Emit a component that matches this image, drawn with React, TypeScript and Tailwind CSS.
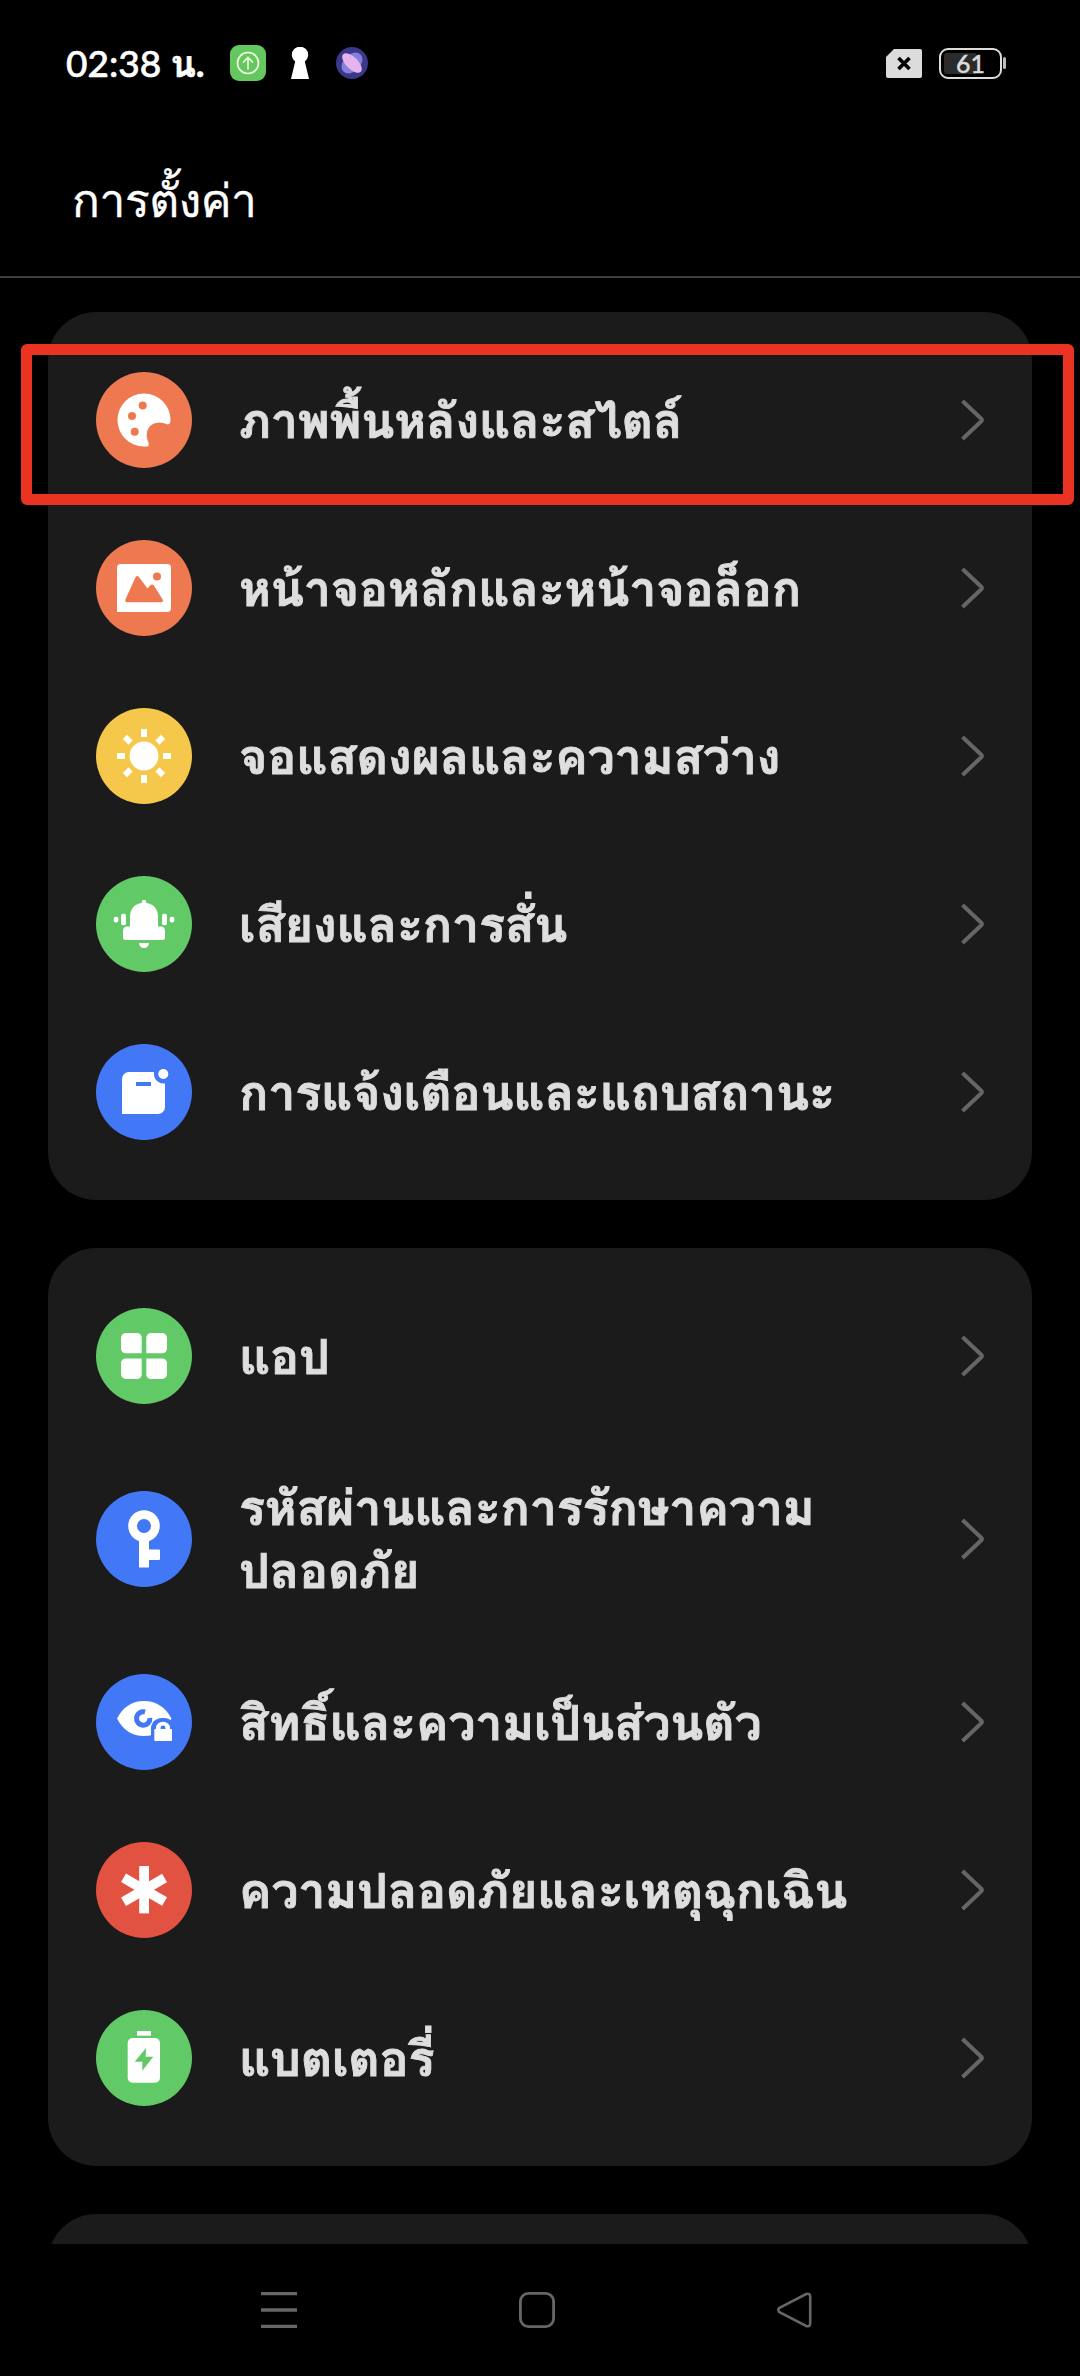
import type { ReactNode } from 'react';

const icons = {
  palette: (
    <g>
      <path fill="#fff" d="M74.5 48A26.5 26.5 0 1 0 48 74.5h2.2q3.2 0 2.4-3.6-2-4.4-2-8Q51.500 51.500 63 50.600q4.500 0 8 1.700 3.500.7 3.500-4.300z" />
      <circle cx="46.700" cy="33.500" r="4" />
      <circle cx="36" cy="44" r="4" />
      <circle cx="38.700" cy="59.700" r="4" />
    </g>
  ),
  picture: (
    <g>
      <path fill="#fff" d="M25 24h46a4 4 0 0 1 4 4v40a4 4 0 0 1-4 4H21V28a4 4 0 0 1 4-4z" />
      <path d="M29.400 59.500 39.500 37.300q1.800-2.800 3.600 0L51.500 48.500l3-3.500q1.500-1.200 3 0L67 60q.4 2-1.500 2.300h-35q-2-.8-1.100-2.800z" />
      <circle cx="61" cy="36.500" r="4" />
    </g>
  ),
  sun: (
    <g fill="#fff">
      <circle cx="48" cy="48" r="14.500" />
      {[0, 45, 90, 135, 180, 225, 270, 315].map((a) => (
        <rect key={a} x="45" y="21" width="6" height="8" transform={`rotate(${a} 48 48)`} />
      ))}
    </g>
  ),
  bell: (
    <g fill="#fff">
      <path d="M46 26v-1q0-1 1-1h2q1 0 1 1v1.700Q62 29 62 41v9.500h3.500q3.500.8 3.500 4.500v6.500q0 2.500-2.500 2.500h-37Q27 64 27 61.500V55q0-3.700 3.500-4.500H34V41q0-12 12-14.300z" />
      <path d="M43 67h10q-.5 5-5 5t-5-5z" />
      <rect x="25" y="37.700" width="5" height="11.500" rx="2" />
      <rect x="17.700" y="40.700" width="4.700" height="5.700" rx="2" />
      <rect x="66" y="37.700" width="5" height="11.500" rx="2" />
      <rect x="73.700" y="40.700" width="4.700" height="5.700" rx="2" />
    </g>
  ),
  notice: (
    <g>
      <path fill="#fff" d="M33 28h25v2a9.500 9.500 0 0 0 11 9.400V63a7 7 0 0 1-7 7H26V35a7 7 0 0 1 7-7z" />
      <circle fill="#fff" cx="67.300" cy="30" r="5" />
      <rect x="40" y="38" width="15" height="4" />
    </g>
  ),
  apps: (
    <g fill="#fff">
      <path d="M30 25h11a4.700 4.700 0 0 1 4.700 4.700v15.600H29.700A4.700 4.700 0 0 1 25 40.600V30a5 5 0 0 1 5-5z" />
      <path d="M55 25h11a5 5 0 0 1 5 5v10.600a4.700 4.700 0 0 1-4.700 4.700h-16V29.700A4.700 4.700 0 0 1 55 25z" />
      <path d="M29.700 50.400h16v16A4.600 4.600 0 0 1 41 71H30a5 5 0 0 1-5-5V55a4.600 4.600 0 0 1 4.700-4.600z" />
      <path d="M50.300 50.400h16A4.600 4.600 0 0 1 71 55v11a5 5 0 0 1-5 5H55a4.600 4.600 0 0 1-4.700-4.600z" />
    </g>
  ),
  key: (
    <g>
      <circle cx="48" cy="35" r="11.400" fill="none" stroke="#fff" strokeWidth="8.800" />
      <path fill="#fff" d="M43 48h10v10.500h10q1 0 1 1V68q0 1-1 1H53v7q0 .6-.6.6h-8.800q-.6 0-.6-.6z" />
    </g>
  ),
  privacy: (
    <g>
      <path fill="#fff" d="M21 44.500Q30 27 48 27t27.500 17.500Q66 62 48 62T21 44.500z" />
      <path fill="none" stroke="currentColor" strokeWidth="5" d="M49 38a6.700 6.700 0 1 0 4.900 6" />
      <path d="M55 70V54.500q0-3 1.300-5Q59 44 67 44t10.500 5.500q1.500 2 1.500 5V70z" />
      <path fill="#fff" d="M60 55v-1.500a7 5.800 0 0 1 14 0V55h1.200q.8 0 .8.800v10.400q0 .8-.8.8H59.100q-.8 0-.8-.8V55.800q0-.8.800-.8zm4.600 0h4.800v-1.200a2.400 2.400 0 0 0-4.800 0z" />
    </g>
  ),
  emergency: (
    <g fill="#fff">
      <rect x="43.200" y="24" width="9.800" height="47.400" />
      <rect x="43.200" y="24" width="9.800" height="47.400" transform="rotate(60 48 47.700)" />
      <rect x="43.200" y="24" width="9.800" height="47.400" transform="rotate(-60 48 47.700)" />
    </g>
  ),
  battery: (
    <g>
      <rect fill="#fff" x="41" y="21" width="14" height="4.700" />
      <rect fill="#fff" x="31.700" y="28" width="32.300" height="44.700" rx="5" />
      <path d="M50 38 38.700 51.700h7.600v9L57.300 46.700H49.700z" />
    </g>
  ),
};

type Item = { icon: keyof typeof icons; color: string; label: ReactNode; tall?: boolean };

const display: Item[] = [
  { icon: 'palette', color: 'text-[#ee7950]', label: 'ภาพพื้นหลังและสไตล์' },
  { icon: 'picture', color: 'text-[#ee7950]', label: 'หน้าจอหลักและหน้าจอล็อก' },
  { icon: 'sun', color: 'text-[#f5c84b]', label: 'จอแสดงผลและความสว่าง' },
  { icon: 'bell', color: 'text-[#61ca67]', label: 'เสียงและการสั่น' },
  { icon: 'notice', color: 'text-[#4277f5]', label: 'การแจ้งเตือนและแถบสถานะ' },
];

const system: Item[] = [
  { icon: 'apps', color: 'text-[#61ca67]', label: 'แอป' },
  { icon: 'key', color: 'text-[#4277f5]', label: <>รหัสผ่านและการรักษาความ<br />ปลอดภัย</>, tall: true },
  { icon: 'privacy', color: 'text-[#4277f5]', label: 'สิทธิ์และความเป็นส่วนตัว' },
  { icon: 'emergency', color: 'text-[#e15241]', label: 'ความปลอดภัยและเหตุฉุกเฉิน' },
  { icon: 'battery', color: 'text-[#61ca67]', label: 'แบตเตอรี่' },
];

function Row({ icon, color, label, tall }: Item) {
  return (
    <li className={`flex items-center px-12 ${tall ? 'h-[198px]' : 'h-[168px]'}`}>
      <svg viewBox="0 0 96 96" fill="currentColor" className={`w-24 h-24 shrink-0 ${color}`}>
        <circle cx="48" cy="48" r="48" />
        {icons[icon]}
      </svg>
      <span className="ml-[47px] flex-1 text-[48.500px] leading-[63px] tracking-[-0.200px] font-bold text-[#dedede] whitespace-nowrap [-webkit-text-stroke:0.900px_#dedede]">{label}</span>
      <svg viewBox="0 0 24 42" fill="none" stroke="#666" strokeWidth="4" strokeLinejoin="round" className="w-6 h-[42px] shrink-0">
        <path d="M2.500 2 21.500 20 Q22.300 21 21.500 22L2.500 40" />
      </svg>
    </li>
  );
}

function Card({ items }: { items: Item[] }) {
  return (
    <ul className="bg-[#1b1b1b] rounded-[48px] py-6 shrink-0">
      {items.map((item) => <Row key={item.icon} {...item} />)}
    </ul>
  );
}

export default function App() {
  return (
    <div className="relative w-[1080px] h-[2376px] bg-black text-white flex flex-col overflow-hidden font-['Loma','Noto_Sans',sans-serif]">
      {/* Status bar */}
      <div className="h-[126px] pl-[66px] pr-[74px] flex items-center justify-between">
        <div className="flex items-center">
          <p className="w-[164px] text-[37px] font-medium whitespace-nowrap font-['Lato','Loma',sans-serif] [-webkit-text-stroke:0.600px_#fff]">
            02:38 <span className="font-bold">น.</span>
          </p>
          <svg viewBox="0 0 36 36" className="w-9 h-9">
            <rect width="36" height="36" rx="9" fill="#65c85f" />
            <g fill="none" stroke="#f0ffe8" strokeWidth="1.600">
              <circle cx="18" cy="18" r="10.500" />
              <path d="M18 24.500V12.500M13 17.500l5-5 5 5" />
            </g>
          </svg>
          <svg viewBox="0 0 18 32" fill="#fff" className="w-[18px] h-8 ml-[25px]">
            <path d="M4.200 14.500a8.200 8.200 0 1 1 9.600 0L18 32H0z" />
          </svg>
          <svg viewBox="0 0 32 32" className="w-8 h-8 ml-[27px]">
            <circle cx="16" cy="16" r="16" fill="#3b3789" />
            <ellipse cx="16" cy="16" rx="12" ry="8.500" fill="#8580dc" transform="rotate(-45 16 16)" />
            <ellipse cx="16" cy="16" rx="12.500" ry="6" fill="#e5b4ef" transform="rotate(45 16 16)" />
          </svg>
        </div>
        <div className="flex items-center">
          <svg viewBox="0 0 36 29" className="w-9 h-[29px]">
            <path fill="#dcdcdc" d="M8 0h26q2 0 2 2v25q0 2-2 2H2q-2 0-2-2V8z" />
            <path stroke="#000" strokeWidth="3.600" d="m12.500 9 11 11m0-11-11 11" />
          </svg>
          <div className="ml-[17px] w-[63px] h-[31px] border-2 border-[#dcdcdc] rounded-[9px] p-[3px] flex relative">
            <div className="w-[33px] h-full bg-[#2b2b2b] rounded-[3px]" />
            <span className="absolute inset-0 flex items-center justify-center text-[25px] leading-none text-[#dcdcdc] font-medium font-['Lato',sans-serif] [-webkit-text-stroke:0.400px_#dcdcdc]">61</span>
          </div>
          <div className="ml-px w-[3px] h-3 rounded-full bg-[#bbb]" />
        </div>
      </div>

      {/* Title */}
      <header className="h-[152px] pl-[72px] pt-[42px] border-b-2 border-[#3d3d3d] shrink-0">
        <h1 className="text-[46px] leading-[66px] tracking-[-0.400px] font-normal [-webkit-text-stroke:0.400px_#fff]">การตั้งค่า</h1>
      </header>

      <main className="flex-1 min-h-0 overflow-hidden px-12 pt-[34px] flex flex-col gap-12">
        <Card items={display} />
        <Card items={system} />
        <div className="h-24 shrink-0 bg-[#1b1b1b] rounded-t-[48px]" />
      </main>

      {/* Navigation bar */}
      <nav className="h-[132px] shrink-0 pl-[261px] pr-[267px] flex items-center justify-between">
        <svg viewBox="0 0 36 36" fill="none" stroke="#666" strokeWidth="3.300" className="w-9 h-9">
          <path d="M0 1.700h36M0 18h36M0 34.300h36" />
        </svg>
        <svg viewBox="0 0 36 36" fill="none" stroke="#666" strokeWidth="2.800" className="w-9 h-9">
          <rect x="1.400" y="1.400" width="33.200" height="33.200" rx="8" />
        </svg>
        <svg viewBox="0 0 36 36" fill="none" stroke="#666" strokeWidth="2.600" className="w-9 h-9">
          <path d="M2.500 15.800 29.200 2Q33 1 33.200 4.500v27Q33 35 29.200 34L2.500 20.200Q0 18 2.500 15.800z" />
        </svg>
      </nav>

      {/* Highlight drawn over the first row */}
      <div className="absolute left-[21px] top-[344px] w-[1053px] h-[161px] border-[11px] border-[#ea3323] rounded-[6px]" />
    </div>
  );
}
